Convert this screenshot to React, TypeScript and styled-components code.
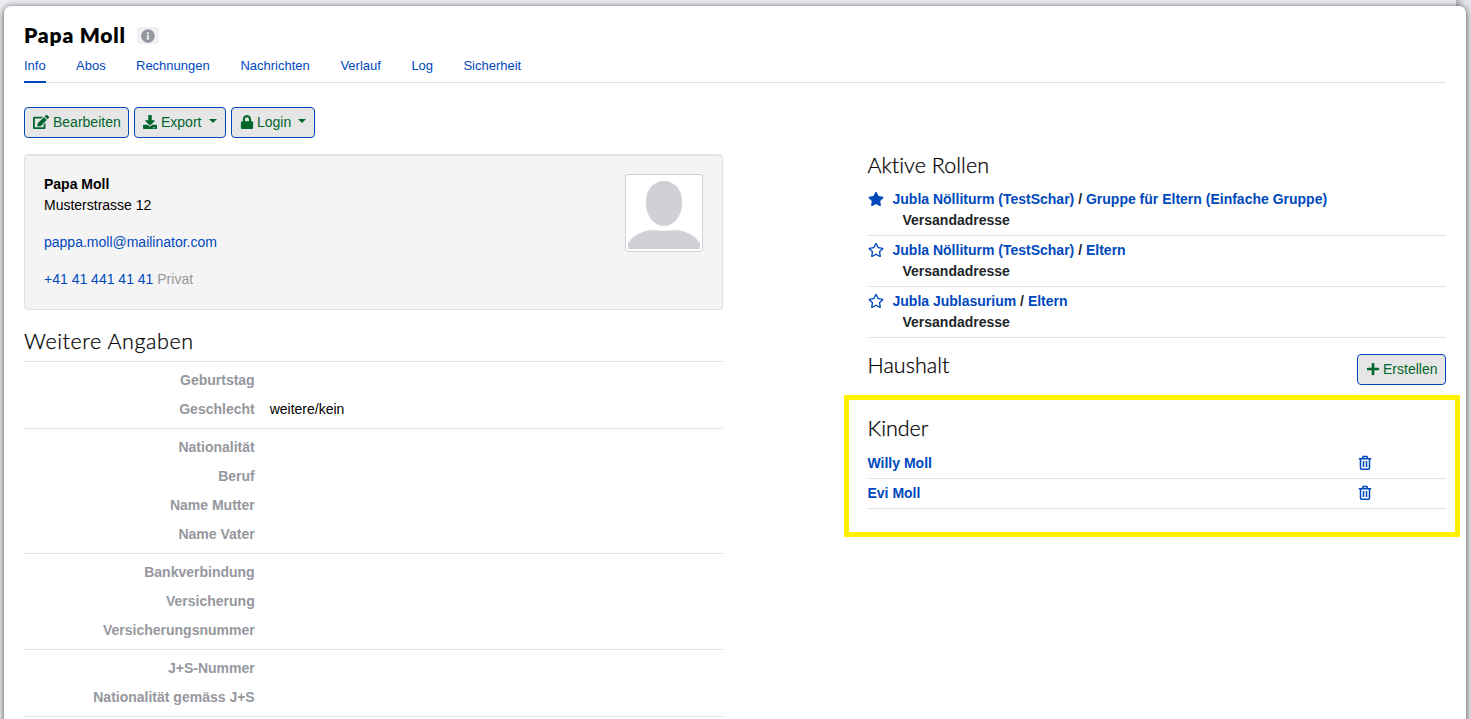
import React from 'react';
import styled, { createGlobalStyle } from 'styled-components';
import { FaInfoCircle, FaEdit, FaDownload, FaLock, FaStar, FaRegStar, FaPlus } from 'react-icons/fa';

const GlobalStyle = createGlobalStyle`
  *, *::before, *::after { box-sizing: border-box; }
  html, body { margin: 0; height: 719px; overflow: hidden; background: #e9ebf0; }
  body { font: 14px/21px "Liberation Sans", Arial, sans-serif; color: #000; }
`;

const Page = styled.div`
  display: flex;
  height: 719px;
  padding: 6px 5px 0 4px;
  background: linear-gradient(90deg, #eceef2 1456px, #b4b5ba 1456px, #e4e6eb 1464px);
`;

const Sheet = styled.main`
  flex: 1;
  height: 730px;
  padding: 17px 20px 0;
  background: #fff;
  border-radius: 7px;
  box-shadow: 0 1px 7px rgba(0, 0, 0, 0.7);
`;

const TitleRow = styled.header`
  display: flex;
  align-items: center;
  height: 26px;
  gap: 11px;
`;

const Title = styled.h1`
  margin: -2px 0 0;
  width: 102px;
  font: 800 21px/26px "Century Gothic", Lato, sans-serif;
  letter-spacing: 0.8px;
  white-space: nowrap;
`;

const InfoBadge = styled.span`
  display: flex;
  align-items: center;
  justify-content: center;
  width: 22px;
  height: 17px;
  margin-top: -1px;
  border-radius: 4px;
  background: #eff1f5;
  color: #95979e;
  font-size: 14px;
`;

const Tabs = styled.nav`
  display: flex;
  gap: 30px;
  height: 34px;
  border-bottom: 1px solid #dfe1e8;
`;

const Tab = styled.a<{ $active?: boolean; $width: number }>`
  width: ${p => p.$width}px;
  height: 34px;
  padding-top: 7px;
  font-size: 13px;
  line-height: 20px;
  white-space: nowrap;
  color: #0049bd;
  border-bottom: 2px solid ${p => (p.$active ? '#0049bd' : 'transparent')};
`;

const Toolbar = styled.div`
  display: flex;
  gap: 5px;
  margin-top: 24px;
`;

const Button = styled.button<{ $width: number; $gap?: number }>`
  display: flex;
  align-items: center;
  width: ${p => p.$width}px;
  height: 31px;
  padding: 0 0 1px 8px;
  gap: ${p => p.$gap ?? 4}px;
  font: 14px/21px "Liberation Sans", Arial, sans-serif;
  white-space: nowrap;
  color: #00662b;
  background: #e6e6e6;
  border: 1px solid #0049bd;
  border-radius: 4px;
  svg { flex: none; }
`;

const Caret = styled.span`
  margin: -2px 0 0 3.5px;
  border: 4px solid transparent;
  border-top-color: currentColor;
  border-bottom: 0;
`;

const Columns = styled.div`
  display: flex;
  justify-content: space-between;
  margin-top: 16px;
`;

const LeftColumn = styled.div`
  width: 699px;
`;

const RightColumn = styled.div`
  width: 578.5px;
`;

const Card = styled.section`
  display: flex;
  justify-content: space-between;
  height: 156px;
  padding: 19px;
  background: #f4f4f4;
  border: 1px solid #e0e0e1;
  border-radius: 4px;
  box-shadow: inset 0 1px 1px rgba(0, 0, 0, 0.05);
`;

const Line = styled.p`
  margin: 0 0 16px;
`;

const Link = styled.a`
  color: #0049bd;
`;

const Muted = styled.span`
  color: #95979a;
`;

const Avatar = styled.div`
  width: 78px;
  height: 78px;
  padding: 2px;
  background: #fff;
  border: 1px solid #d0d1d7;
  border-radius: 3px;
  svg { display: block; }
`;

const Heading = styled.h2<{ $spacing: number }>`
  margin: 0;
  height: 24px;
  font: 300 21.5px/23px "Century Gothic", Lato, sans-serif;
  -webkit-text-stroke: 0.25px #000;
  letter-spacing: ${p => p.$spacing}px;
  white-space: nowrap;
`;

const Details = styled.section`
  margin-top: 20px;
`;

const Group = styled.dl`
  margin: 0;
  padding: 4px 0;
  border-top: 1px solid #e0e1e3;
`;

const Groups = styled.div`
  margin-top: 7px;
  border-bottom: 1px solid #e0e1e3;
`;

const Field = styled.div`
  display: flex;
  gap: 15px;
  height: 29px;
  padding: 4px 0;
`;

const Term = styled.dt`
  width: 230.7px;
  text-align: right;
  font-weight: 700;
  color: #95979e;
`;

const Value = styled.dd`
  margin: 0;
`;

const Roles = styled.div`
  margin-top: 7px;
`;

const Role = styled.div`
  display: flex;
  gap: 9px;
  height: 51px;
  padding: 4px 0;
  border-bottom: 1px solid #e0e1e3;
  font-weight: 700;
  color: #212529;
  svg { flex: none; margin-top: 2px; color: #0049bd; }
`;

const RoleName = styled.div`
  padding-left: 10px;
`;

const HouseholdBar = styled.div`
  display: flex;
  justify-content: space-between;
  margin-top: 16px;
`;

const Highlight = styled.section`
  height: 142px;
  margin: 10px -14px 0 -23.5px;
  padding: 17px 9px 0 18.5px;
  border: 5px solid #fff200;
`;

const ChildList = styled.div`
  margin-top: 8px;
`;

const Child = styled.div`
  display: flex;
  justify-content: space-between;
  height: 30px;
  padding: 4px 74.5px 4px 0;
  border-bottom: 1px solid #e0e1e3;
  font-weight: 700;
  svg { margin-top: 2px; }
`;

const Trash = () => (
  <svg width="14" height="16" viewBox="0 0 14 16" fill="none" stroke="#0049bd" strokeWidth="1.5">
    <path d="M.8 3.7h12.4M4.2 3.5l.9-1.9h3.8l.9 1.9M2.5 4v9.1q0 1.2 1.2 1.2h6.6q1.2 0 1.2-1.2V4M5.5 6v6M8.5 6v6" />
  </svg>
);

const tabs: [string, number][] = [
  ['Info', 22], ['Abos', 30], ['Rechnungen', 74.4], ['Nachrichten', 70],
  ['Verlauf', 41], ['Log', 22], ['Sicherheit', 59],
];

const groups: [string, string?][][] = [
  [['Geburtstag'], ['Geschlecht', 'weitere/kein']],
  [['Nationalität'], ['Beruf'], ['Name Mutter'], ['Name Vater']],
  [['Bankverbindung'], ['Versicherung'], ['Versicherungsnummer']],
  [['J+S-Nummer'], ['Nationalität gemäss J+S']],
];

const roles = [
  { layer: 'Jubla Nölliturm (TestSchar)', group: 'Gruppe für Eltern (Einfache Gruppe)', primary: true },
  { layer: 'Jubla Nölliturm (TestSchar)', group: 'Eltern', primary: false },
  { layer: 'Jubla Jublasurium', group: 'Eltern', primary: false },
];

export default function App() {
  return (
    <>
      <GlobalStyle />
      <Page>
        <Sheet>
          <TitleRow>
            <Title>Papa Moll</Title>
            <InfoBadge><FaInfoCircle /></InfoBadge>
          </TitleRow>
          <Tabs>
            {tabs.map(([label, width], i) => (
              <Tab key={label} $width={width} $active={i === 0}>{label}</Tab>
            ))}
          </Tabs>
          <Toolbar>
            <Button $width={105}><FaEdit size={16} />Bearbeiten</Button>
            <Button $width={92}><FaDownload size={14} />Export<Caret /></Button>
            <Button $width={84} $gap={3}><FaLock size={14} />Login<Caret /></Button>
          </Toolbar>
          <Columns>
            <LeftColumn>
              <Card>
                <div>
                  <Line><strong>Papa Moll</strong><br />Musterstrasse 12</Line>
                  <Line><Link>pappa.moll@mailinator.com</Link></Line>
                  <Line><Link>+41 41 441 41 41</Link> <Muted>Privat</Muted></Line>
                </div>
                <Avatar>
                  <svg width="72" height="72" viewBox="0 0 72 72" fill="#d0d1d7">
                    <path d="M36 4C46 4 54 12 54 24C55 37 47 49 36 49S17 37 18 24C18 12 26 4 36 4Z" />
                    <path d="M0 72V66C6 57 15 54 24 53Q36 54.5 48 53C57 54 66 57 72 66V72Z" />
                  </svg>
                </Avatar>
              </Card>
              <Details>
                <Heading $spacing={0.6}>Weitere Angaben</Heading>
                <Groups>
                  {groups.map((fields, i) => (
                    <Group key={i}>
                      {fields.map(([term, value]) => (
                        <Field key={term}><Term>{term}</Term><Value>{value}</Value></Field>
                      ))}
                    </Group>
                  ))}
                </Groups>
              </Details>
            </LeftColumn>
            <RightColumn>
              <Heading $spacing={0.05}>Aktive Rollen</Heading>
              <Roles>
                {roles.map((r, i) => (
                  <Role key={i}>
                    {r.primary ? <FaStar size={16} /> : <FaRegStar size={16} />}
                    <div>
                      <Link>{r.layer}</Link> / <Link>{r.group}</Link>
                      <RoleName>Versandadresse</RoleName>
                    </div>
                  </Role>
                ))}
              </Roles>
              <HouseholdBar>
                <Heading $spacing={0.05}>Haushalt</Heading>
                <Button $width={89} $gap={3}><FaPlus size={14} />Erstellen</Button>
              </HouseholdBar>
              <Highlight>
                <Heading $spacing={0}>Kinder</Heading>
                <ChildList>
                  <Child><Link>Willy Moll</Link><Trash /></Child>
                  <Child><Link>Evi Moll</Link><Trash /></Child>
                </ChildList>
              </Highlight>
            </RightColumn>
          </Columns>
        </Sheet>
      </Page>
    </>
  );
}
